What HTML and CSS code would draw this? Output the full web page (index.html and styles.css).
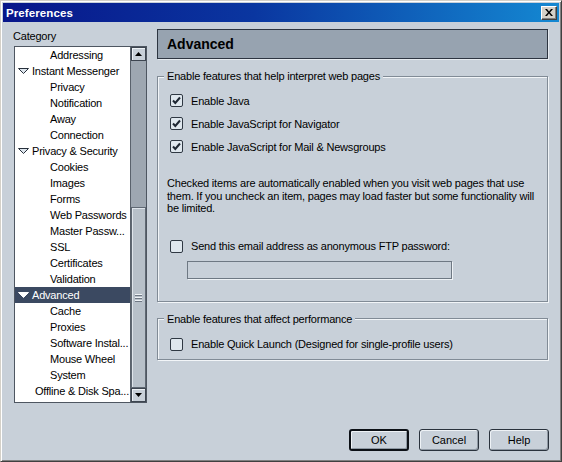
FILE: index.html
```html
<!DOCTYPE html>
<html>
<head>
<meta charset="utf-8">
<title>Preferences</title>
<link rel="stylesheet" href="styles.css">
</head>
<body>
<div class="window">
  <div class="titlebar">
    <span class="title">Preferences</span>
    <span class="close"><svg width="8" height="7" viewBox="0 0 8 7"><path d="M0 0h2l2 2.5L6 0h2L5 3.5 8 7H6L4 4.5 2 7H0l3-3.5z" fill="#000"/></svg></span>
  </div>
  <div class="content">
    <div class="sidebar">
      <div class="cat-label">Category</div>
      <div class="tree">
        <div class="rows">
          <div class="row child">Addressing</div>
          <div class="row parent"><svg class="twisty" width="11" height="6" viewBox="0 0 11 6"><path d="M0.5 0.5h10l-5 5z" fill="#dde5ed" stroke="#27303c"/></svg>Instant Messenger</div>
          <div class="row child">Privacy</div>
          <div class="row child">Notification</div>
          <div class="row child">Away</div>
          <div class="row child">Connection</div>
          <div class="row parent"><svg class="twisty" width="11" height="6" viewBox="0 0 11 6"><path d="M0.5 0.5h10l-5 5z" fill="#dde5ed" stroke="#27303c"/></svg>Privacy &amp; Security</div>
          <div class="row child">Cookies</div>
          <div class="row child">Images</div>
          <div class="row child">Forms</div>
          <div class="row child">Web Passwords</div>
          <div class="row child">Master Passw...</div>
          <div class="row child">SSL</div>
          <div class="row child">Certificates</div>
          <div class="row child">Validation</div>
          <div class="row parent selected"><svg class="twisty" width="11" height="6" viewBox="0 0 11 6"><path d="M0.5 0.5h10l-5 5z" fill="#ffffff" stroke="#ffffff"/></svg>Advanced</div>
          <div class="row child">Cache</div>
          <div class="row child">Proxies</div>
          <div class="row child">Software Instal...</div>
          <div class="row child">Mouse Wheel</div>
          <div class="row child">System</div>
          <div class="row top">Offline &amp; Disk Spa...</div>
        </div>
        <div class="scrollbar">
          <div class="sb-btn"><svg width="7" height="4" viewBox="0 0 7 4"><path d="M3.5 0L7 4H0z" fill="#000"/></svg></div>
          <div class="sb-track"></div>
          <div class="sb-thumb"><span class="grip"></span><span class="grip"></span><span class="grip"></span></div>
          <div class="sb-btn"><svg width="7" height="4" viewBox="0 0 7 4"><path d="M0 0h7L3.5 4z" fill="#000"/></svg></div>
        </div>
      </div>
    </div>
    <div class="panel">
      <div class="panel-header">Advanced</div>
      <fieldset class="group group-web">
        <legend>Enable features that help interpret web pages</legend>
        <div class="checks">
          <div class="check-row"><span class="cb checked"><svg width="11" height="11" viewBox="0 0 11 11"><path d="M2 5.5l2.3 2.5L9 2.5" fill="none" stroke="#1e2733" stroke-width="2"/></svg></span>Enable Java</div>
          <div class="check-row"><span class="cb checked"><svg width="11" height="11" viewBox="0 0 11 11"><path d="M2 5.5l2.3 2.5L9 2.5" fill="none" stroke="#1e2733" stroke-width="2"/></svg></span>Enable JavaScript for Navigator</div>
          <div class="check-row"><span class="cb checked"><svg width="11" height="11" viewBox="0 0 11 11"><path d="M2 5.5l2.3 2.5L9 2.5" fill="none" stroke="#1e2733" stroke-width="2"/></svg></span>Enable JavaScript for Mail &amp; Newsgroups</div>
        </div>
        <p class="note">Checked items are automatically enabled when you visit web pages that use them. If you uncheck an item, pages may load faster but some functionality will be limited.</p>
        <div class="checks send">
          <div class="check-row"><span class="cb"></span>Send this email address as anonymous FTP password:</div>
        </div>
        <div class="field"></div>
      </fieldset>
      <fieldset class="group group-perf">
        <legend>Enable features that affect performance</legend>
        <div class="checks">
          <div class="check-row"><span class="cb"></span>Enable Quick Launch (Designed for single-profile users)</div>
        </div>
      </fieldset>
    </div>
  </div>
  <div class="buttons">
    <button class="btn default">OK</button>
    <button class="btn">Cancel</button>
    <button class="btn">Help</button>
  </div>
</div>
</body>
</html>
```

FILE: styles.css
```css
* { box-sizing: border-box; }
html, body { margin: 0; padding: 0; }
body {
  width: 562px;
  height: 462px;
  overflow: hidden;
  font-family: "Liberation Sans", Arial, sans-serif;
  font-size: 11px;
  letter-spacing: -0.2px;
  color: #000;
  background: #c8d0d9;
}
.window {
  width: 562px;
  height: 462px;
  display: flex;
  flex-direction: column;
  background: #c8d0d9;
  border: 1px solid;
  border-color: #d4d0c8 #404040 #404040 #d4d0c8;
  box-shadow: inset 1px 1px 0 #ffffff, inset -1px -1px 0 #808080;
  padding: 2px;
}
.titlebar {
  height: 19px;
  display: flex;
  align-items: center;
  justify-content: space-between;
  padding: 0 2px 0 3px;
  background: linear-gradient(90deg, #08168a 0%, #0a36a0 45%, #1488d2 100%);
}
.title {
  color: #fff;
  font-weight: bold;
  font-size: 11.5px;
  letter-spacing: 0.1px;
}
.close {
  width: 16px;
  height: 14px;
  display: flex;
  align-items: center;
  justify-content: center;
  background: #d4d0c8;
  border: 1px solid;
  border-color: #ffffff #404040 #404040 #ffffff;
  box-shadow: inset -1px -1px 0 #808080;
}
.content {
  display: flex;
  gap: 10px;
  padding: 7px 11px 0 11px;
}
.sidebar {
  width: 133px;
  display: flex;
  flex-direction: column;
}
.cat-label {
  line-height: 14px;
  height: 14px;
  margin: 0 0 3px -1px;
}
.tree {
  height: 357px;
  display: flex;
  border: 1px solid #4e5661;
  background: #fff;
}
.rows {
  flex: 1;
  overflow: hidden;
}
.row {
  height: 16px;
  line-height: 16px;
  white-space: nowrap;
  display: flex;
  align-items: center;
}
.row.child { padding-left: 35px; }
.row.top { padding-left: 20px; }
.row.parent { padding-left: 3px; }
.twisty { margin-right: 3px; flex: none; }
.row.selected { background: #3b4961; color: #fff; }
.scrollbar {
  width: 16px;
  display: flex;
  flex-direction: column;
  background: #9ea7b1;
  border-left: 1px solid #5a626c;
}
.sb-btn {
  height: 14px;
  display: flex;
  align-items: center;
  justify-content: center;
  background: #c8d0d9;
  border: 1px solid #3d4550;
  box-shadow: inset 1px 1px 0 #eef2f6;
}
.sb-track { height: 146px; }
.sb-thumb {
  height: 181px;
  display: flex;
  flex-direction: column;
  align-items: center;
  justify-content: center;
  gap: 1px;
  background: #b7c0c9;
  border: 1px solid #5f6873;
  box-shadow: inset 1px 1px 0 #dfe5eb;
}
.grip {
  width: 7px;
  height: 2px;
  border-top: 1px solid #eef2f6;
  border-bottom: 1px solid #6f7884;
}
.panel {
  flex: 1;
  display: flex;
  flex-direction: column;
}
.panel-header {
  height: 30px;
  line-height: 28px;
  padding-left: 9px;
  font-size: 14px;
  font-weight: bold;
  letter-spacing: 0;
  background: #97a3b0;
  border: 1px solid #2d3541;
  box-shadow: 1px 1px 0 #e6ebf0;
}
.group {
  margin: 10px 0 0 0;
  padding: 0;
  min-width: 0;
  border: 1px solid #818b96;
  box-shadow: inset 1px 1px 0 #f2f5f8, 1px 1px 0 #f2f5f8;
}
.group legend {
  margin-left: 6px;
  padding: 0 3px;
  line-height: 14px;
  background: #c8d0d9;
}
.checks { padding-left: 12px; }
.group-web .checks:first-of-type { padding-top: 6px; }
.check-row {
  height: 23px;
  display: flex;
  align-items: center;
  gap: 8px;
  white-space: nowrap;
}
.cb {
  width: 13px;
  height: 13px;
  flex: none;
  display: flex;
  align-items: center;
  justify-content: center;
  background: #dfe7ee;
  border: 1px solid #2f3843;
  border-radius: 2px;
}
.note {
  margin: 19px 5px 0 9px;
  line-height: 12.5px;
}
.checks.send { margin-top: 20px; }
.field {
  width: 265px;
  height: 18px;
  margin: 3px 0 22px 29px;
  border: 1px solid #6e7883;
  box-shadow: 1px 1px 0 #eef2f6;
}
.group-perf .checks { padding-top: 7px; padding-bottom: 3px; }
.buttons {
  margin-top: auto;
  display: flex;
  justify-content: flex-end;
  gap: 10px;
  padding: 0 10px 8px 0;
}
.btn {
  width: 60px;
  height: 22px;
  padding: 0;
  font-family: "Liberation Sans", Arial, sans-serif;
  font-size: 11px;
  color: #000;
  background: #c8d0d9;
  border: 1px solid #2a323d;
  border-radius: 3px;
  box-shadow: inset 1px 1px 0 #eef2f6, inset -1px -1px 0 #8e98a3;
}
.btn.default {
  border: 2px solid #0c1016;
}
```
